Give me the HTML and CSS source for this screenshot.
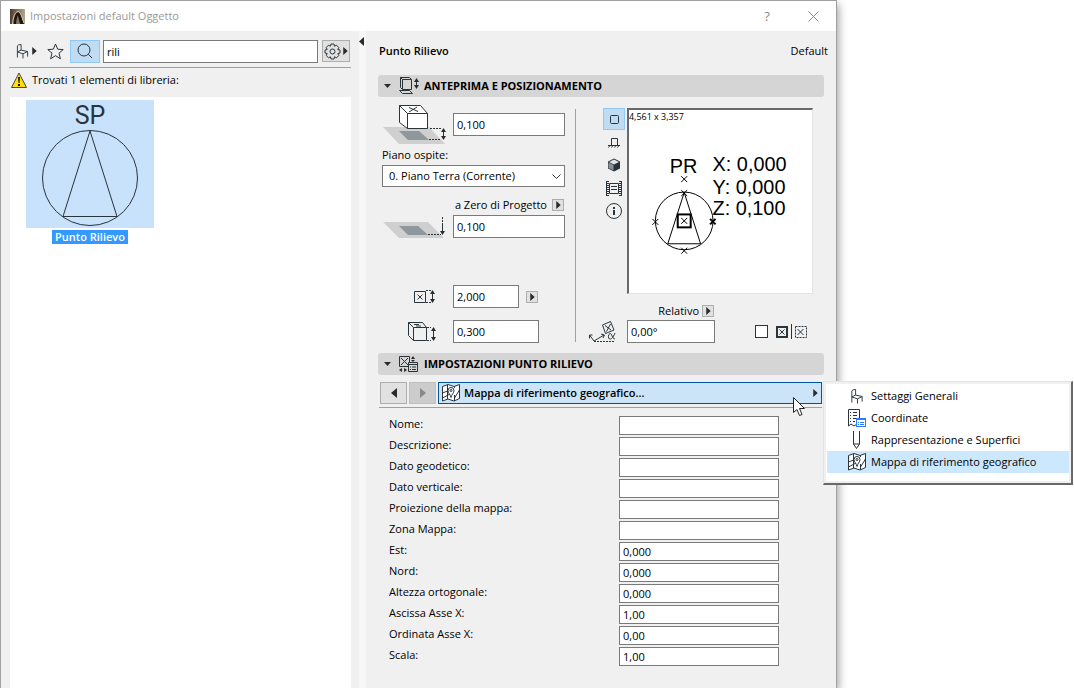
FILE: index.html
```html
<!DOCTYPE html>
<html lang="it">
<head>
<meta charset="utf-8">
<title>Impostazioni default Oggetto</title>
<link rel="stylesheet" href="styles.css">
</head>
<body>
<svg class="defs" aria-hidden="true">
  <symbol id="chair" viewBox="0 0 14 16"><path d="M1.500 14.500V2Q2 .5 5.500 .5V6.500M1.500 8.500L5.500 6.500 12.500 8 7.500 10.500ZM12.500 8V13.500M7.500 10.500V15.500"/></symbol>
  <symbol id="map" viewBox="0 0 18 18"><path class="fill-white" d="M.5 2.500L6 .5 12 2.500 17.500 .5V14.500L12 17 6 15 .5 17Z"/><path d="M5.500 1V15M12.500 11V17M12.500 2.500V4M.5 9L5.500 7M.5 14L8 10M12.500 14L17.500 6"/><path class="fill-white" d="M9 13.500C8.500 10.500 6 9 6 6.500A3 3 0 0 1 12 6.500C12 9 9.500 10.500 9 13.500Z"/><circle cx="9" cy="6.500" r="1"/></symbol>
  <symbol id="right" viewBox="0 0 5 9"><path class="solid" d="M0 0L5 4.500 0 9Z"/></symbol>
</svg>
<main class="dialog">
  <header class="titlebar">
    <svg class="logo" width="15" height="15" viewBox="0 0 15 15"><defs><linearGradient id="lg"><stop offset="0" stop-color="#4a3c2c"/><stop offset="1" stop-color="#b3a88c"/></linearGradient></defs><path fill="url(#lg)" d="M0 0H15V15H0Z"/><path fill="#1d1712" d="M4 15C4 9 5 4 8 3 11 4 12 10 14 15H10C9 11 8 8 8 6 7 8 6 12 6 15Z"/><path stroke="#d2c5a8" fill="none" d="M2.500 15C3 8 5 3 8 2.500 11 3 12 9 14 14"/></svg>
    <h1 class="title">Impostazioni default Oggetto</h1>
    <button class="plain help" aria-label="Aiuto">?</button>
    <button class="plain close" aria-label="Chiudi"><svg class="ico gray" width="11" height="11"><path d="M.5 .5L10.500 10.500M10.500 .5L.5 10.500"/></svg></button>
  </header>
  <div class="panes">
    <section class="library">
      <div class="toolbar">
        <button class="plain" aria-label="Tipo oggetto"><svg class="ico" width="13" height="15"><use href="#chair"/></svg><svg class="ico" width="5" height="8"><use href="#right"/></svg></button>
        <button class="plain star" aria-label="Preferiti"><svg class="ico" width="17" height="17"><path d="M8.500 1L10.700 6.200 16.200 6.600 12 10.200 13.400 15.800 8.500 12.700 3.600 15.800 5 10.200 .8 6.600 6.300 6.200Z"/></svg></button>
        <button class="search on" aria-label="Cerca"><svg class="ico" width="16" height="16"><circle cx="7" cy="7" r="6"/><path d="M11.300 11.300L15 15"/></svg></button>
        <input class="box query" type="text" aria-label="Testo da cercare" value="rili">
        <button class="gear" aria-label="Opzioni"><svg class="ico" width="17" height="17"><circle cx="8.500" cy="8.500" r="2.500"/><path d="M7 1H10L10.500 3.200 12.500 2.200 14.800 4.500 13.800 6.500 16 7V10L13.800 10.500 14.800 12.500 12.500 14.800 10.500 13.800 10 16H7L6.500 13.800 4.500 14.800 2.200 12.500 3.200 10.500 1 10V7L3.200 6.500 2.200 4.500 4.500 2.200 6.500 3.200Z"/></svg><svg class="ico" width="5" height="8"><use href="#right"/></svg></button>
      </div>
      <p class="found"><svg width="16" height="16"><path d="M8 1L15.500 15.500H.5Z" fill="#ffe000" stroke="#454545"/><path d="M7 5H9L8.500 11H7.500ZM7 12H9V14H7Z" fill="#111"/></svg><span>Trovati 1 elementi di libreria:</span></p>
      <div class="results">
        <button class="item">
          <svg class="thumb" width="128" height="128"><text class="sp" x="64" y="24" text-anchor="middle">SP</text><circle cx="64" cy="78" r="47.500"/><path d="M64 31L91 116.500H37Z"/></svg>
          <span class="caption">Punto Rilievo</span>
        </button>
      </div>
    </section>
    <div class="splitter"><svg class="ico" width="5" height="9"><path class="solid" d="M5 0V9L0 4.500Z"/></svg></div>
    <section class="settings">
      <header class="head"><h2>Punto Rilievo</h2><span>Default</span></header>
      <h3 class="bar"><svg class="ico" width="7" height="4"><path class="solid" d="M0 0H7L3.500 4Z"/></svg><svg class="ico" width="20" height="18"><path d="M3.500 2.500L1.500 .5H10.500L12.500 2.500M1.500 .5V10.500L3.500 12.500M3.500 2.500H12.500V12.500H3.500ZM.5 13.500H10.500L13.500 16.500H3.500Z"/><path d="M17.500 2V11"/><path class="solid" d="M15 5L17.500 1 20 5ZM15 8L17.500 12 20 8Z"/></svg><span>ANTEPRIMA E POSIZIONAMENTO</span></h3>
      <div class="placement">
        <div class="elevations">
          <div class="row tall">
            <svg class="pic" width="63" height="42"><path fill="#cfcfcf" d="M0 24H46L62 41H16Z"/><path fill="#8e979c" d="M16 28H36L46 37H25Z"/><g class="ico"><path class="fill-white" d="M16.500 2.500H37.500L44.500 10.500V25.500H24.500L16.500 19.500Z"/><path d="M16.500 2.500L24.500 10.500H44.500M24.500 10.500V25.500M26 4.500L35 8.500M34 4L26 9"/><path stroke-dasharray="2 1" d="M47 25.500H58M46 36.500H58"/><path d="M60.500 26V36"/><path class="solid" d="M58 29L60.500 25 63 29ZM58 33L60.500 37 63 33Z"/></g></svg>
            <input class="box grow" type="text" aria-label="Quota dal piano ospite" value="0,100">
          </div>
          <label class="host" for="host">Piano ospite:</label>
          <div class="pick"><select class="box" id="host"><option>0. Piano Terra (Corrente)</option></select><svg class="ico chev" width="9" height="6"><path d="M.5 .5L4.500 4.500 8.500 .5"/></svg></div>
          <div class="row zero"><label for="zero">a Zero di Progetto</label><button class="mini" aria-label="Scegli riferimento"><svg class="ico" width="5" height="8"><use href="#right"/></svg></button></div>
          <div class="row">
            <svg class="pic" width="63" height="24"><path fill="#cfcfcf" d="M0 7H45L61 23H16Z"/><path fill="#8e979c" d="M16 11H35L45 20H25Z"/><g class="ico"><path stroke-dasharray="2 1" d="M45 19.500H58M59.500 2V8"/><path d="M59.500 8V18"/><path class="solid" d="M57 16L59.500 20 62 16Z"/></g></svg>
            <input class="box grow" type="text" id="zero" value="0,100">
          </div>
          <div class="row first-size">
            <span class="side"><svg class="ico" width="22" height="13"><path d="M.5 1.500H11.500V12.500H.5ZM3.500 4.500L8.500 9.500M8.500 4.500L3.500 9.500"/><path stroke-dasharray="2 1" d="M12 .5H17M12 12.500H17"/><path d="M18.500 1V12"/><path class="solid" d="M16 4L18.500 0 21 4ZM16 9L18.500 13 21 9Z"/></svg></span>
            <input class="box w66" type="text" aria-label="Dimensione" value="2,000"><button class="mini" aria-label="Unità"><svg class="ico" width="5" height="8"><use href="#right"/></svg></button>
          </div>
          <div class="row size">
            <span class="side"><svg class="ico" width="28" height="19"><path d="M.5 .5H14.500L18.500 5.500V18.500H5.500L.5 13.500ZM.5 .5L5.500 5.500H18.500M5.500 5.500V18.500M6 2.500H11M8 4H13"/><path stroke-dasharray="2 1" d="M19 5.500H23M19 18.500H23"/><path d="M25.500 6V18"/><path class="solid" d="M23 9L25.500 5 28 9ZM23 15L25.500 19 28 15Z"/></svg></span>
            <input class="box w86" type="text" aria-label="Altezza" value="0,300">
          </div>
        </div>
        <div class="divider"></div>
        <div class="preview">
          <div class="viewer">
            <div class="views">
              <button class="on" aria-label="Pianta"><svg class="ico" width="9" height="9"><rect x=".5" y=".5" width="8" height="8" rx="1"/></svg></button>
              <button class="plain" aria-label="Prospetto"><svg class="ico" width="13" height="11"><path d="M3.500 8V1.500H9.500V8M0 8.500H12M2 8.500L.5 10.500M5 8.500L3.500 10.500M8 8.500L6.500 10.500M11 8.500L9.500 10.500"/></svg></button>
              <button class="plain" aria-label="Vista 3D"><svg width="14" height="14"><path fill="#26323a" d="M7 .5L13 3.500V10.500L7 13.500 1 10.500V3.500Z"/><path fill="#dfe2e3" d="M7 1.500L12 4 7 6.500 2 4Z"/><path fill="#87929a" d="M1.500 4.500L6.500 7V12.500L1.500 10Z"/></svg></button>
              <button class="plain" aria-label="Immagine"><svg class="ico" width="16" height="15"><path d="M3.500 2.500H12.500V12.500H3.500ZM5 5.500H11M5 8.500H11"/><path d="M.5 0V15M15.500 0V15"/><path stroke-width="2" stroke-dasharray="1 1" d="M2 0V15M14 0V15"/></svg></button>
              <button class="plain" aria-label="Informazioni"><svg class="ico" width="16" height="16"><circle cx="8" cy="8" r="7.500"/><path stroke-width="2" d="M8 7V12M8 4V6"/></svg></button>
            </div>
            <div class="canvas">
              <svg viewBox="0 0 184 184" role="img" aria-label="Anteprima simbolo">
                <text class="dim" x="0" y="10">4,561 x 3,357</text>
                <text x="41" y="63">PR</text><text x="84" y="61">X: 0,000</text><text x="84" y="84">Y: 0,000</text><text x="84" y="106">Z: 0,100</text>
                <circle cx="55.500" cy="111.500" r="29"/><path d="M55.500 83L72 134.500H39Z"/>
                <rect class="thick" x="49" y="105" width="13" height="13"/>
                <path d="M52.500 66.500L58.500 72.500M58.500 66.500L52.500 72.500M52.500 80.500L58.500 86.500M58.500 80.500L52.500 86.500M23.500 109.500L29.500 115.500M29.500 109.500L23.500 115.500M52.500 138.500L58.500 144.500M58.500 138.500L52.500 144.500M52.500 108.500L58.500 114.500M58.500 108.500L52.500 114.500"/>
                <path class="thick" d="M81.500 109.500L87 115M87 109.500L81.500 115"/>
              </svg>
            </div>
          </div>
          <div class="relative"><label for="angle">Relativo</label><button class="mini" aria-label="Scegli angolo"><svg class="ico" width="5" height="8"><use href="#right"/></svg></button></div>
          <div class="rotation">
            <svg class="ico" width="28" height="22"><path d="M13.500 4L21.500 .5 25 9 16.500 12.500ZM16 4.500L22 9M21.500 3L17.500 10.500M.5 14L5 20 15 14"/><path d="M.5 17.500V14H3.500M12 13L15.500 14 14 17"/><path stroke-dasharray="2 1" d="M5 20.500H26"/><path d="M26 12C24 17 22 18.500 20.500 18S19 13 21 12.500 23 18 26 18"/></svg>
            <input class="box" type="text" id="angle" value="0,00°">
            <span class="anchors"><input type="checkbox" aria-label="Simmetria"><svg class="ico" width="33" height="15"><rect x="2" y="3" width="10" height="10" stroke-width="2"/><path d="M4.500 5.500L9.500 10.500M9.500 5.500L4.500 10.500M16.500 0V15M22.500 5L28.500 11M28.500 5L22.500 11"/><rect x="20.500" y="2.500" width="11" height="11" stroke-dasharray="2 1"/></svg></span>
          </div>
        </div>
      </div>
      <h3 class="bar"><svg class="ico" width="7" height="4"><path class="solid" d="M0 0H7L3.500 4Z"/></svg><svg class="ico" width="20" height="17"><path d="M.5 .5H10.500V10.500H.5ZM2 2L9 9M9 2L2 9"/><path d="M9.500 6.500H18.500V15.500H9.500Z" fill="#d5d5d5"/><path d="M9 8.500H19M11 11H12M13 11H17M11 13.500H12M13 13.500H17"/><path class="solid" d="M12 3L14 0 16 3ZM12 4H16L14 6ZM0 14L3 12V16ZM5 12L8 14 5 16Z"/></svg><span>IMPOSTAZIONI PUNTO RILIEVO</span></h3>
      <nav class="pager">
        <button class="step" aria-label="Pagina precedente"><svg class="ico" width="6" height="10"><path class="solid" d="M6 0V10L0 5Z"/></svg></button>
        <button class="step off" aria-label="Pagina successiva" disabled><svg class="ico" width="6" height="10"><path class="solid" d="M0 0V10L6 5Z"/></svg></button>
        <div class="combo">
          <button class="current" aria-haspopup="menu" aria-expanded="true"><svg class="ico" width="18" height="18"><use href="#map"/></svg><span>Mappa di riferimento geografico...</span><svg class="ico arrow" width="5" height="8"><use href="#right"/></svg></button>
          <div class="menu" role="menu">
            <button role="menuitem"><svg class="ico" width="18" height="15"><use href="#chair"/></svg>Settaggi Generali</button>
            <button role="menuitem"><svg class="ico" width="18" height="18"><path class="fill-white" d="M.5 .5H11.500V17L9 15 6 17 3 15 .5 17Z"/><path d="M2 3.500H3M5 3.500H9M2 6.500H3M5 6.500H9M2 9.500H3M5 9.500H8M2 12.500H3M5 12.500H7"/><rect class="blue" x="8.500" y="9.500" width="9" height="8"/><path class="blue" d="M8 10.500H18M10 13.500H11M12 13.500H16M10 15.500H11M12 15.500H16"/></svg>Coordinate</button>
            <button role="menuitem"><svg class="ico" width="18" height="18"><path d="M5.500 0V13L8.500 17.500 11.500 13V0M5.500 13H11.500"/></svg>Rappresentazione e Superfici</button>
            <button role="menuitem" class="hot"><svg class="ico" width="18" height="18"><use href="#map"/></svg>Mappa di riferimento geografico</button>
          </div>
          <svg class="pointer" width="13" height="20"><path fill="#fff" stroke="#222" d="M.5 .5V15.500L4 12.500 6.500 18.500 9 17.500 6.500 11.500H11.500Z"/></svg>
        </div>
      </nav>
      <form class="fields">
        <label for="f1">Nome:</label><input class="box" type="text" id="f1">
        <label for="f2">Descrizione:</label><input class="box" type="text" id="f2">
        <label for="f3">Dato geodetico:</label><input class="box" type="text" id="f3">
        <label for="f4">Dato verticale:</label><input class="box" type="text" id="f4">
        <label for="f5">Proiezione della mappa:</label><input class="box" type="text" id="f5">
        <label for="f6">Zona Mappa:</label><input class="box" type="text" id="f6">
        <label for="f7">Est:</label><input class="box" type="text" id="f7" value="0,000">
        <label for="f8">Nord:</label><input class="box" type="text" id="f8" value="0,000">
        <label for="f9">Altezza ortogonale:</label><input class="box" type="text" id="f9" value="0,000">
        <label for="f10">Ascissa Asse X:</label><input class="box" type="text" id="f10" value="1,00">
        <label for="f11">Ordinata Asse X:</label><input class="box" type="text" id="f11" value="0,00">
        <label for="f12">Scala:</label><input class="box" type="text" id="f12" value="1,00">
      </form>
    </section>
  </div>
</main>
</body>
</html>
```
FILE: styles.css
```css
* { box-sizing: border-box; }
body {
  margin: 0;
  padding-right: 237px;
  background: #fff;
  color: #000;
  font: 11px/16px "Open Sans", "Noto Sans", sans-serif;
}
h1, h2, h3, p { margin: 0; font-size: inherit; }
h2 { font-weight: 600; }
button, input, select { font: inherit; color: inherit; }
button { display: flex; align-items: center; justify-content: center; padding: 0; border: 1px solid #adadad; background: #e1e1e1; }
svg { flex: none; }
.defs { position: absolute; width: 0; height: 0; }
.ico { fill: none; stroke: #29343b; }
.solid { fill: #2b2b2b; stroke: none; }
.fill-white { fill: #fff; }
.gray { stroke: #888; }
.blue { stroke: #2a7bff; fill: #fff; }
.plain { border: 0; background: none; }
.on { border-color: #90c8f6; background: #c0dcf3; }
.box { border: 1px solid #7a7a7a; border-radius: 0; background: #fff; padding: 0 3px; min-width: 0; outline: 0; }

.dialog {
  display: flex;
  flex-direction: column;
  min-height: 100vh;
  border: 1px solid #a0a0a0;
  border-bottom: 0;
  background: #f0f0f0;
  box-shadow: 2px 4px 8px rgba(0, 0, 0, .35);
}
.titlebar { display: flex; align-items: center; height: 30px; padding: 0 17px 0 9px; background: #fff; }
.title { margin: 0 auto 0 5px; color: #999; font-weight: 400; }
.help { width: 16px; margin-right: 32px; color: #888; font-size: 13px; }
.close { width: 12px; }
.panes { display: flex; flex: 1; }

.library { display: flex; flex-direction: column; width: 358px; padding: 8px 8px 0; }
.toolbar { display: flex; align-items: center; height: 29px; padding: 0 1px 4px 7px; border-bottom: 1px solid #a0a0a0; }
.toolbar .plain { gap: 3px; }
.toolbar .star { margin: 0 6px 0 10px; }
.search { width: 30px; height: 23px; }
.query { flex: 1; height: 23px; margin: 0 4px 0 3px; }
.gear { width: 28px; height: 22px; gap: 2px; }
.found { display: flex; align-items: center; gap: 5px; height: 24px; margin: 0 2px 5px; }
.results { flex: 1; margin-left: 1px; padding: 3px 16px; background: #fff; }
.item { flex-direction: column; gap: 2px; border: 0; background: none; }
.thumb { background: #c9e2fb; fill: none; stroke: #29343b; }
.sp { fill: #29343b; stroke: none; font: 25px Roboto, sans-serif; }
.caption { padding: 0 3px; background: #3399ff; color: #fff; font-weight: 600; line-height: 14px; }
.splitter { width: 7px; padding-top: 6px; background: #f7f7f7; }
.splitter svg { display: block; }

.settings { flex: 1; min-width: 0; padding: 0 12px; }
.head { display: flex; align-items: center; justify-content: space-between; height: 44px; padding: 0 0 4px 1px; }
.head span { margin-right: -4px; }
.bar { display: flex; align-items: center; height: 22px; padding-left: 6px; gap: 8px; border-radius: 3px; background: #d5d5d5; font-weight: 700; }
.bar span { margin-left: -3px; }

.placement { display: flex; padding: 6px 0 10px 4px; }
.elevations { width: 183px; }
.row { display: flex; align-items: center; height: 23px; }
.row .box { height: 23px; }
.tall { height: 42px; }
.pic { margin: 0 7px 0 1px; }
.grow { flex: 1; }
.host { display: block; line-height: 20px; }
.pick { position: relative; }
.pick select { display: block; width: 100%; height: 22px; padding-left: 6px; appearance: none; }
.chev { position: absolute; right: 4px; top: 9px; }
.zero { justify-content: flex-end; height: 20px; margin-top: 8px; gap: 5px; padding-right: 1px; }
.mini { width: 12px; height: 12px; }
.first-size { margin: 47px 0 12px; }
.first-size .mini { margin-left: 7px; }
.side { display: flex; justify-content: flex-end; width: 54px; margin-right: 17px; }
.w66 { width: 66px; }
.w86 { width: 86px; }
.divider { width: 1px; margin: 6px 0 1px 10px; background: #a0a0a0; }
.preview { flex: 1; min-width: 0; padding: 5px 11px 0 13px; }
.viewer { display: flex; gap: 2px; padding-left: 14px; }
.views { display: flex; flex-direction: column; }
.views button { width: 22px; height: 22px; margin-bottom: 1px; }
.canvas { flex: 1; min-width: 0; border: 1px solid #e3e3e3; border-top: 2px solid #696969; border-left: 2px solid #696969; background: #fff; }
.canvas svg { display: block; width: 100%; height: 183px; fill: none; stroke: #000; }
.canvas text { fill: #000; stroke: none; font: 20px "Liberation Sans", sans-serif; }
.canvas .dim { font: 9px "Open Sans", "Noto Sans", sans-serif; }
.canvas .thick { stroke-width: 2; }
.relative { display: flex; align-items: center; justify-content: flex-end; width: 125px; height: 18px; margin-top: 8px; gap: 3px; }
.rotation { display: flex; align-items: center; gap: 10px; }
.rotation .box { width: 88px; height: 23px; }
.anchors { display: flex; align-items: center; gap: 7px; margin: 0 5px 0 auto; }
.anchors input { width: 13px; height: 13px; margin: 0; appearance: none; border: 1px solid #333; background: #fff; }

.pager { display: flex; margin: 7px 2px 0 1px; padding: 0 0 3px 1px; border-bottom: 1px solid #a0a0a0; }
.step { width: 27px; height: 22px; margin-right: 2px; }
.off { background: #ccc; border-color: #bfbfbf; }
.off .solid { fill: #888; }
.combo { position: relative; flex: 1; }
.current { width: 100%; height: 22px; padding: 0 3px; gap: 4px; border-color: #00549e; background: #cce4f7; font-weight: 600; }
.arrow { margin-left: auto; }
.menu {
  position: absolute;
  left: 100%;
  top: -1px;
  width: 250px;
  margin-left: 1px;
  padding: 3px 2px 10px 3px;
  border: 1px solid #e3e3e3;
  border-right: 2px solid #696969;
  border-bottom: 2px solid #696969;
  background: #fff;
  box-shadow: inset 0 0 0 2px #f0f0f0;
}
.menu button { justify-content: flex-start; width: 100%; height: 22px; padding-left: 21px; gap: 5px; border: 0; background: none; }
.menu .hot { background: #cce8ff; }
.pointer { position: absolute; right: 16px; top: 15px; }

.fields { display: grid; grid-template-columns: 1fr 160px; grid-auto-rows: 19px; gap: 2px 0; padding: 8px 45px 0 11px; }
```
